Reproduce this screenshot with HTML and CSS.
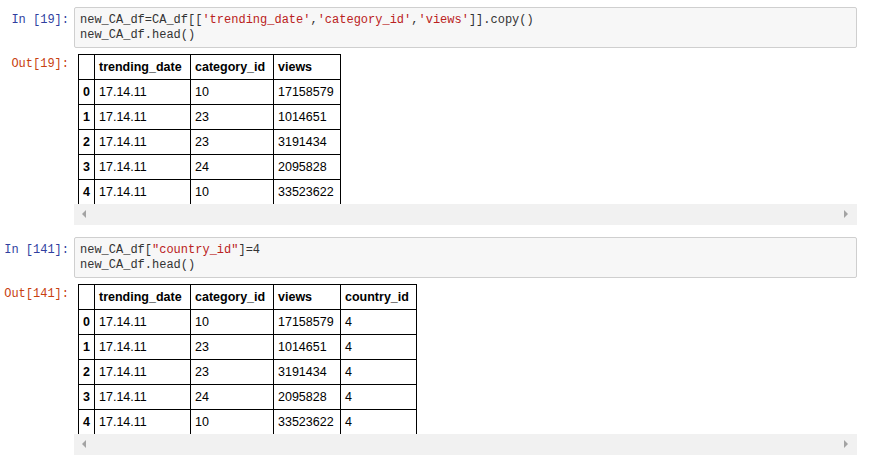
FILE: index.html
```html
<!DOCTYPE html>
<html>
<head>
<meta charset="utf-8">
<link rel="stylesheet" href="styles.css">
</head>
<body>
<div class="notebook">
  <div class="cell">
    <div class="prompt in">In&nbsp;[19]:</div>
    <div class="input"><pre>new_CA_df=CA_df[[<span class="s">'trending_date'</span>,<span class="s">'category_id'</span>,<span class="s">'views'</span>]].copy()
new_CA_df.head()</pre></div>
    <div class="prompt out">Out[19]:</div>
    <div class="output">
      <div class="clip">
        <table class="df df1">
          <colgroup><col class="c-idx"><col class="c-td"><col class="c-cat"><col class="c-views"></colgroup>
          <thead><tr><th></th><th>trending_date</th><th>category_id</th><th>views</th></tr></thead>
          <tbody>
            <tr><th>0</th><td>17.14.11</td><td>10</td><td>17158579</td></tr>
            <tr><th>1</th><td>17.14.11</td><td>23</td><td>1014651</td></tr>
            <tr><th>2</th><td>17.14.11</td><td>23</td><td>3191434</td></tr>
            <tr><th>3</th><td>17.14.11</td><td>24</td><td>2095828</td></tr>
            <tr><th>4</th><td>17.14.11</td><td>10</td><td>33523622</td></tr>
          </tbody>
        </table>
      </div>
      <div class="hscroll"><span class="arr left"></span><span class="arr right"></span></div>
    </div>
  </div>

  <div class="cell">
    <div class="prompt in">In&nbsp;[141]:</div>
    <div class="input"><pre>new_CA_df[<span class="s">"country_id"</span>]=4
new_CA_df.head()</pre></div>
    <div class="prompt out">Out[141]:</div>
    <div class="output">
      <div class="clip">
        <table class="df df2">
          <colgroup><col class="c-idx"><col class="c-td"><col class="c-cat"><col class="c-views"><col class="c-cty"></colgroup>
          <thead><tr><th></th><th>trending_date</th><th>category_id</th><th>views</th><th>country_id</th></tr></thead>
          <tbody>
            <tr><th>0</th><td>17.14.11</td><td>10</td><td>17158579</td><td>4</td></tr>
            <tr><th>1</th><td>17.14.11</td><td>23</td><td>1014651</td><td>4</td></tr>
            <tr><th>2</th><td>17.14.11</td><td>23</td><td>3191434</td><td>4</td></tr>
            <tr><th>3</th><td>17.14.11</td><td>24</td><td>2095828</td><td>4</td></tr>
            <tr><th>4</th><td>17.14.11</td><td>10</td><td>33523622</td><td>4</td></tr>
          </tbody>
        </table>
      </div>
      <div class="hscroll"><span class="arr left"></span><span class="arr right"></span></div>
    </div>
  </div>
</div>
</body>
</html>
```
FILE: styles.css
```css
html, body {
  margin: 0;
  padding: 0;
  background: #fff;
}
.notebook {
  padding: 7px 23px 0 0;
  display: flex;
  flex-direction: column;
  gap: 12px;
}
.cell {
  display: grid;
  grid-template-columns: 74px 1fr;
  row-gap: 6px;
}
.prompt {
  font-family: "Liberation Mono", monospace;
  font-size: 12px;
  line-height: 15px;
  text-align: right;
  padding-right: 5px;
  white-space: nowrap;
}
.prompt.in {
  color: #303F9F;
  padding-top: 6px;
}
.prompt.out {
  color: #C8400F;
  padding-top: 3px;
}
.input {
  background: #f7f7f7;
  border: 1px solid #cfcfcf;
  border-radius: 2px;
  height: 39px;
  box-sizing: content-box;
}
.input pre {
  margin: 0;
  padding: 5px 0 0 5px;
  font-family: "Liberation Mono", monospace;
  font-size: 12px;
  line-height: 15px;
  color: #333;
}
.s { color: #BA2121; }
.output {
  display: flex;
  flex-direction: column;
}
.clip {
  height: 150px;
  overflow: hidden;
  padding-left: 4px;
}
.df {
  border-collapse: collapse;
  table-layout: fixed;
  font-family: "Liberation Sans", Arial, sans-serif;
  font-size: 12.5px;
  color: #000;
}
.df1 { width: 263px; }
.df2 { width: 339px; }
.c-idx { width: 16px; }
.c-td { width: 96px; }
.c-cat { width: 83px; }
.c-views { width: 67px; }
.c-cty { width: 76px; }
.df tr { height: 25px; }
.df th, .df td {
  border: 1px solid #000;
  padding: 0 0 0 4px;
  text-align: left;
  vertical-align: middle;
  white-space: nowrap;
}
.df th { font-weight: bold; }
.hscroll {
  height: 21px;
  background: #f1f1f1;
  position: relative;
}
.arr {
  position: absolute;
  top: 6px;
  width: 0;
  height: 0;
  border-top: 4px solid transparent;
  border-bottom: 4px solid transparent;
}
.arr.left {
  left: 8px;
  border-right: 4px solid #a3a3a3;
}
.arr.right {
  right: 9px;
  border-left: 4px solid #a3a3a3;
}
```
